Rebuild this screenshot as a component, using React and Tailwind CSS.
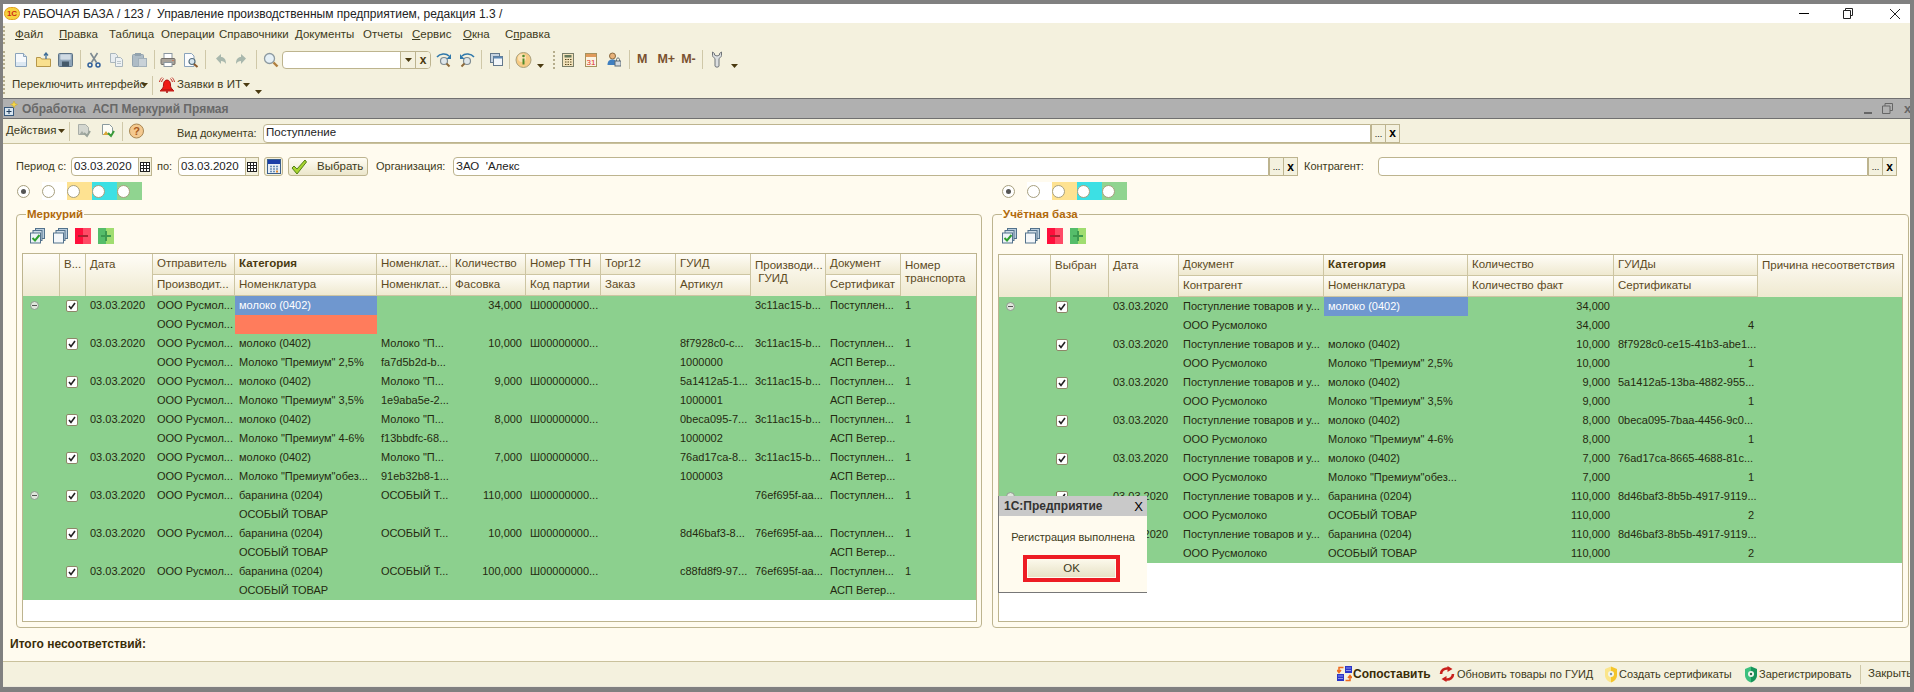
import React from "react";

const brown = "text-[#5c4a1e]";

const Svg = ({ w = 16, h = 16, className = "", children }) => (
  <svg width={w} height={h} viewBox={`0 0 ${w} ${h}`} className={`shrink-0 ${className}`}>
    {children}
  </svg>
);

const Arrow = ({ className = "" }) => (
  <Svg w={7} h={4} className={className}>
    <path d="M0 0h7L3.500 4z" fill="#4a3a10" />
  </Svg>
);

const Sep = ({ className = "" }) => <div className={`w-px h-[19px] bg-[#cfc8a8] shrink-0 ${className}`} />;

const Handle = () => (
  <div className="w-[3px] h-[18px] shrink-0 border-l-2 border-dotted border-[#b5ad8c]" />
);

const NewDoc = () => (
  <Svg w={14}>
    <path d="M1.500 1.500h8l3 3v10h-11z" fill="#f6f9fc" stroke="#8aa3bb" />
    <path d="M2 10h10v4H2z" fill="#dce8f2" />
    <path d="M9.500 1.500v3h3" fill="#dbe6ef" stroke="#8aa3bb" />
  </Svg>
);
const Open = () => (
  <Svg w={15}>
    <path d="M.5 5.500h4l1 1.500h9v7.500H.5z" fill="#f9e08e" stroke="#b6974a" />
    <path d="M10 7V2M8 3.500L10 1l2 2.500" fill="none" stroke="#3f6f99" strokeWidth="1.300" />
  </Svg>
);
const Save = () => (
  <Svg w={15}>
    <rect x=".5" y="1.500" width="14" height="13" rx="1" fill="#8ea4b8" stroke="#5d7386" />
    <rect x="2.500" y="2.500" width="10" height="5" fill="#e8eef3" />
    <path d="M3 4h9M3 6h9" stroke="#b8c8d5" />
    <rect x="4" y="9.500" width="7" height="5" fill="#44596a" />
  </Svg>
);
const Cut = () => (
  <Svg w={14}>
    <path d="M3.500 1l6 9.500M10.500 1l-6 9.500" stroke="#7d8a92" strokeWidth="1.600" fill="none" />
    <circle cx="3" cy="13" r="2" fill="none" stroke="#2f5f9a" strokeWidth="1.500" />
    <circle cx="11" cy="13" r="2" fill="none" stroke="#2f5f9a" strokeWidth="1.500" />
  </Svg>
);
const CopyIcon = () => (
  <Svg w={15}>
    <path d="M1.500 1.500h5l2 2v7h-7z" fill="#e8edf0" stroke="#aab6bd" />
    <path d="M6.500 5.500h5l2 2v7h-7z" fill="#eef2f4" stroke="#aab6bd" />
    <path d="M8 9.500h4M8 11.500h4" stroke="#bcc6cb" />
  </Svg>
);
const Paste = () => (
  <Svg w={15}>
    <rect x=".5" y="2.500" width="11" height="12" rx="1" fill="#aebcc6" stroke="#93a3ae" />
    <rect x="6.500" y="6.500" width="8" height="8" fill="#c9d2d8" stroke="#a3b1ba" />
    <rect x="3" y="1" width="6" height="3" fill="#93a3ae" />
  </Svg>
);
const Printer = () => (
  <Svg>
    <rect x="4" y="1.500" width="8" height="5" fill="#fff" stroke="#8b97a0" />
    <rect x="1" y="6.500" width="14" height="6" rx="1" fill="#a9a39a" stroke="#75706a" />
    <path d="M12.500 8.500h1" stroke="#d85a2a" strokeWidth="1.200" />
    <rect x="4" y="10.500" width="8" height="4" fill="#fff" stroke="#8b97a0" />
  </Svg>
);
const Preview = () => (
  <Svg>
    <path d="M1.500 1.500h7l2.500 2.500v10.500H1.500z" fill="#fbfcfd" stroke="#8aa3bb" />
    <circle cx="9" cy="9.500" r="3" fill="#d7e6ef" stroke="#56707f" strokeWidth="1.200" />
    <path d="M11 12l3.500 3" stroke="#8c5a2c" strokeWidth="2" />
  </Svg>
);
const Back = ({ flip }) => (
  <Svg w={12} className={flip ? "-scale-x-100" : ""}>
    <path d="M1 6.500L6 2v3c3 0 5 2 5 7-1-2-3-3-5-3v3z" fill="#a9b8ad" />
  </Svg>
);
const Lens = () => (
  <Svg>
    <circle cx="6.500" cy="6.500" r="5" fill="#e5f0f6" stroke="#8d9aa0" strokeWidth="1.300" />
    <path d="M10.500 10.500l4 4" stroke="#b07f3e" strokeWidth="2.400" />
  </Svg>
);
const FindIcon = ({ flip }) => (
  <Svg className={flip ? "-scale-x-100" : ""}>
    <circle cx="8" cy="9" r="3.500" fill="#dfe7ea" stroke="#7f8c92" strokeWidth="1.200" />
    <path d="M10.500 11.500l3 3" stroke="#8c6a3a" strokeWidth="2" />
    <path d="M1 5C4 1.500 10 1 13 4" fill="none" stroke="#2f78ab" strokeWidth="1.600" />
    <path d="M15 2v5h-4.500z" fill="#2f78ab" />
  </Svg>
);
const Windows = () => (
  <Svg w={15}>
    <rect x="1.500" y="1.500" width="9" height="9" fill="#c6d3e0" stroke="#63788c" />
    <rect x="4.500" y="4.500" width="9" height="9" fill="#f2f6f9" stroke="#63788c" />
    <path d="M4.500 5.500h9" stroke="#5d88b5" strokeWidth="2" />
  </Svg>
);
const Info = () => (
  <Svg w={17}>
    <circle cx="8.500" cy="8" r="7.500" fill="#f6cb84" stroke="#a9a07c" />
    <circle cx="7" cy="6" r="4" fill="#fbe3b5" />
    <circle cx="8.500" cy="4" r="1.300" fill="#4f8a2c" />
    <path d="M8.500 6.500v6" stroke="#4f8a2c" strokeWidth="2" />
  </Svg>
);
const Calc = () => (
  <Svg w={12}>
    <rect x=".5" y="1.500" width="11" height="13" fill="#f3e3bb" stroke="#7a7f6a" />
    <rect x="2.500" y="3" width="7" height="2.500" fill="#66795a" />
    <path d="M3 7.500h1.500M5.500 7.500H7M8 7.500h1.500M3 10h1.500M5.500 10H7M8 10h1.500M3 12.500h1.500M5.500 12.500H7M8 12.500h1.500" stroke="#5a4a20" />
  </Svg>
);
const Cal31 = () => (
  <Svg w={12}>
    <rect x=".5" y="1.500" width="11" height="13" fill="#fbf4e3" stroke="#a5925f" />
    <rect x="1" y="2" width="10" height="3" fill="#e09a5a" />
    <text x="6" y="13" textAnchor="middle" fontSize="8" fontFamily="Liberation Sans" fill="#e0301f">31</text>
  </Svg>
);
const UserLock = () => (
  <Svg w={14}>
    <circle cx="5.500" cy="4" r="3" fill="#e8b27a" stroke="#8a6a40" />
    <path d="M.5 13c0-4 2-5.500 5-5.500S9 9 9 10v3z" fill="#3f7fc0" />
    <rect x="8" y="9" width="6" height="5" fill="#d4dadf" stroke="#5b6a75" />
    <path d="M9.500 9V7.500c0-2 3-2 3 0V9" fill="none" stroke="#5b6a75" />
  </Svg>
);
const Wrench = () => (
  <Svg w={10} h={17}>
    <path d="M.5 1v3.500C.5 6 2.500 7 3 7.500V15c0 1.500 4 1.500 4 0V7.500c.5-.5 2.500-1.500 2.500-3V1L7.500 2.500V4L5 5 2.500 4V2.500z" fill="#dcdfe0" stroke="#6f7478" />
  </Svg>
);
const Bell = () => (
  <Svg>
    <path d="M8 3c2.500 0 3.500 2.500 3.500 5s1 3.500 2.500 5H2c1.500-1.500 2.500-2.500 2.500-5S5.500 3 8 3z" fill="#f01a14" stroke="#a81210" />
    <rect x="1" y="13" width="14" height="1.500" fill="#c8201a" />
    <circle cx="8" cy="15" r="1" fill="#a81210" />
    <path d="M2.500 5c.5-1.500 1-2.500 2-3.500M13.500 5c-.5-1.500-1-2.500-2-3.500M.5 5C1 3 1.500 2 3 .5M15.500 5C15 3 14.500 2 13 .5" stroke="#c02a20" fill="none" />
  </Svg>
);
const SubIcon = () => (
  <Svg w={14}>
    <rect x=".5" y="6.500" width="9" height="8" fill="#d9e6f0" stroke="#37597c" />
    <path d="M5 8v5M2.500 10.500h5" stroke="#1d3a5a" />
    <path d="M10 0l1 2.500 2.500 1-2.500 1-1 2.500-1-2.500-2.500-1 2.500-1z" fill="#f5d94a" stroke="#c7a22a" strokeWidth=".5" />
  </Svg>
);
const DocGreen = ({ gray }) => (
  <Svg w={15}>
    <path d="M2.500 1.500h7l3 3v7h-10z" fill={gray ? "#d3d6cf" : "#fdfdf6"} stroke={gray ? "#a9aea8" : "#8a9a9e"} />
    <path d="M3 12l3-4 3 4z" fill={gray ? "#a3aaa3" : "#d9a637"} />
    <path d="M8 10l3 3 3-5" fill="none" stroke={gray ? "#9aa39a" : "#3a9b3a"} strokeWidth="2" />
  </Svg>
);
const Help = () => (
  <Svg w={15}>
    <circle cx="7.500" cy="8" r="7" fill="#f4c98f" stroke="#a88753" />
    <text x="7.500" y="12" textAnchor="middle" fontSize="11" fontWeight="bold" fontFamily="Liberation Sans" fill="#a85a1f">?</text>
  </Svg>
);
const Grid = () => (
  <Svg w={10} h={10}>
    <rect x=".5" y=".5" width="9" height="9" fill="#fff" stroke="#222" />
    <path d="M.5 3.500h9M.5 6.500h9M3.500 .5v9M6.500 .5v9" stroke="#222" />
  </Svg>
);
const PeriodCal = () => (
  <Svg w={14} h={15}>
    <rect x=".5" y=".5" width="13" height="14" fill="#e8eef5" stroke="#3b5f8c" />
    <rect x="1" y="1" width="12" height="4" fill="#1d3fa8" />
    <path d="M3 7.500h2M6 7.500h2M9 7.500h2M3 10h2M6 10h2M9 10h2M3 12.500h2M6 12.500h2" stroke="#6c8fb5" strokeWidth="1.400" />
    <rect x="9" y="11.500" width="2" height="2" fill="#e08a2a" />
  </Svg>
);
const CheckBig = () => (
  <Svg w={16} h={16}>
    <path d="M1 9l2-2 3 3L14 1l1.500 2L6 15z" fill="#a8d42e" stroke="#55801a" />
  </Svg>
);
const SelectAll = () => (
  <Svg w={15}>
    <rect x="5.500" y=".5" width="9" height="10" fill="#b9cddd" stroke="#53728c" />
    <rect x="3" y="2.500" width="9" height="10" fill="#cfdce6" stroke="#53728c" />
    <rect x=".5" y="5" width="10" height="10" fill="#eef4f7" stroke="#53728c" />
    <path d="M2.500 10l2.500 2.500L9.500 7" fill="none" stroke="#2fa02f" strokeWidth="2" />
  </Svg>
);
const SelectNone = () => (
  <Svg w={15}>
    <rect x="5.500" y=".5" width="9" height="10" fill="#b9cddd" stroke="#53728c" />
    <rect x="3" y="2.500" width="9" height="10" fill="#cfdce6" stroke="#53728c" />
    <rect x=".5" y="5" width="10" height="10" fill="#f4f7f9" stroke="#53728c" />
  </Svg>
);
const RedMinus = () => (
  <Svg>
    <rect width="8" height="16" fill="#ff0f3c" />
    <rect x="8" width="8" height="16" fill="#ff4a66" />
    <rect x="3" y="7" width="10" height="2" fill="#a8202f" />
  </Svg>
);
const GreenPlus = () => (
  <Svg>
    <rect width="8" height="16" fill="#55bd6a" />
    <rect x="8" width="8" height="16" fill="#a0dd70" />
    <path d="M8 3v10M3 8h10" stroke="#3c9a50" strokeWidth="2" />
  </Svg>
);
const Match = () => (
  <Svg w={15} h={16}>
    <rect x="8" y="0" width="7" height="7" fill="#2b35c8" />
    <path d="M9 2h5M9 4.500h5" stroke="#8d94e8" />
    <rect x="0" y="8" width="7" height="7" fill="#2b35c8" />
    <path d="M1 10h5M1 12.500h5" stroke="#8d94e8" />
    <path d="M6.500 1.500H2V6M0 4l2 2.500L4 4" fill="none" stroke="#ee6a1c" strokeWidth="1.500" />
    <path d="M8.500 14.500H13V10M11 12l2-2.500 2 2.500" fill="none" stroke="#ee6a1c" strokeWidth="1.500" />
  </Svg>
);
const Refresh = () => (
  <Svg h={16}>
    <path d="M2 8C2 4.500 5 2 9 2.500M14 8c0 3.500-3 6-7 5.500" fill="none" stroke="#c8201c" strokeWidth="2.600" />
    <path d="M8.500 0l5 3-5 3zM7.500 16l-5-3 5-3z" fill="#c8201c" />
  </Svg>
);
const Shield = ({ left, right, dot }) => (
  <Svg w={14} h={17}>
    <path d="M7 .5L1 3v6c0 4 3 6.500 6 7.500z" fill={left} />
    <path d="M7 .5l6 2.500v6c0 4-3 6.500-6 7.500z" fill={right} />
    <circle cx="7" cy="8" r="3" fill="#f4f6ee" />
    <circle cx="7" cy="8" r="1.200" fill={dot} />
  </Svg>
);

const Dots = () => (
  <div className="w-[15px] h-full shrink-0 bg-[#f4f1de] border border-[#bdb48f] flex items-end justify-center pb-[3px] text-[9px] leading-none text-black">...</div>
);
const Clear = () => (
  <div className="w-[15px] h-full shrink-0 -ml-px bg-[#f4f1de] border border-[#bdb48f] flex items-center justify-center text-[12px] leading-none font-bold text-black">x</div>
);

const Input = ({ value, className = "" }) => (
  <div className={`h-full flex items-center bg-white border border-[#bdb48f] pl-[2px] overflow-hidden whitespace-nowrap text-[11.5px] text-[#222] rounded-l-[4px] ${className}`}>
    {value}
  </div>
);

const DateField = ({ className = "" }) => (
  <div className={`flex h-full shrink-0 ${className}`}>
    <Input value="03.03.2020" className="w-[68px]" />
    <div className="w-[14px] -ml-px border border-[#bdb48f] bg-[#f4f1de] flex items-center justify-center">
      <Grid />
    </div>
  </div>
);

const Radio = ({ on }) => (
  <div className="w-[13px] h-[13px] rounded-full bg-white border border-[#a79f7e] flex items-center justify-center">
    {on && <div className="w-[5px] h-[5px] rounded-full bg-[#555]" />}
  </div>
);

const RadioCell = ({ on, bg = "" }) => (
  <div className={`w-[25px] h-[18px] flex items-center ${bg}`}>
    <Radio on={on} />
  </div>
);

const RadioRow = ({ className = "" }) => (
  <div className={`flex ${className}`}>
    <RadioCell on />
    <RadioCell bg="bg-white" />
    <RadioCell bg="bg-[#fee291]" />
    <RadioCell bg="bg-[#3ce0e4]" />
    <RadioCell bg="bg-[#90d490]" />
  </div>
);

const Check = () => (
  <div className="w-[12px] h-[12px] rounded-[2px] bg-white border border-[#8d8668] flex items-center justify-center">
    <svg width="8" height="8" viewBox="0 0 8 8">
      <path d="M1 4l2 2.500L7 1" fill="none" stroke="#222" strokeWidth="1.600" />
    </svg>
  </div>
);

const Expander = () => (
  <div className="w-[9px] h-[9px] rounded-full bg-[#dfe6dc] border border-[#8c9a8c] flex items-center justify-center">
    <div className="w-[5px] h-px bg-[#555]" />
  </div>
);

const hCell = "flex items-center pl-1 border-r border-[#cdc5a2] overflow-hidden whitespace-nowrap";
const hGrad = "bg-gradient-to-b from-[#fffdf7] to-[#efe9d0]";

const HeadCell = ({ children, span, bold, className = "" }) => (
  <div className={`${hCell} ${hGrad} ${span ? "row-span-2 items-start pt-[5px]" : "h-[21px] border-b"} ${bold ? "font-bold text-[#4a3a10]" : ""} ${className}`}>
    {children}
  </div>
);

const cellBase = "flex items-center overflow-hidden whitespace-nowrap h-[19px]";

// в строке: колонки слева направо, right - номера колонок с выравниванием вправо
const Row = ({ cols, cells, right, fills = {}, checkPad }) => (
  <div className={`grid ${cols} h-[19px]`}>
    {cells.map((c, i) => (
      <div key={i} className={`${cellBase} ${right.includes(i) ? "justify-end pr-1" : "pl-1"} ${fills[i] || ""}`}>
        {c === "E" ? <div className="pl-[3px]"><Expander /></div> : c === "C" ? <div className={checkPad}><Check /></div> : c}
      </div>
    ))}
  </div>
);

const leftCols = "grid-cols-[37px_26px_67px_82px_142px_74px_75px_75px_75px_75px_75px_75px_75px]";
const rightCols = "grid-cols-[52px_58px_70px_145px_144px_146px_144px_144px]";

const L1 = "ООО Русмол...";
const SH = "Ш00000000...";
const GU = "3c11ac15-b...";
const PS = "Поступлен...";
const OV = "АСП Ветер...";
const D = "03.03.2020";
const MILK = "молоко (0402)";
const RAM = "баранина (0204)";
const ST = "ОСОБЫЙ Т...";
const SP = "ОСОБЫЙ ТОВАР";

const leftRows = [
  ["E", "C", D, L1, MILK, "", "34,000", SH, "", "", GU, PS, "1"],
  ["", "", "", L1, "", "", "", "", "", "", "", "", ""],
  ["", "C", D, L1, MILK, 'Молоко "П...', "10,000", SH, "", "8f7928c0-c...", GU, PS, "1"],
  ["", "", "", L1, 'Молоко "Премиум" 2,5%', "fa7d5b2d-b...", "", "", "", "1000000", "", OV, ""],
  ["", "C", D, L1, MILK, 'Молоко "П...', "9,000", SH, "", "5a1412a5-1...", GU, PS, "1"],
  ["", "", "", L1, 'Молоко "Премиум" 3,5%', "1e9aba5e-2...", "", "", "", "1000001", "", OV, ""],
  ["", "C", D, L1, MILK, 'Молоко "П...', "8,000", SH, "", "0beca095-7...", GU, PS, "1"],
  ["", "", "", L1, 'Молоко "Премиум" 4-6%', "f13bbdfc-68...", "", "", "", "1000002", "", OV, ""],
  ["", "C", D, L1, MILK, 'Молоко "П...', "7,000", SH, "", "76ad17ca-8...", GU, PS, "1"],
  ["", "", "", L1, 'Молоко "Премиум"обез...', "91eb32b8-1...", "", "", "", "1000003", "", OV, ""],
  ["E", "C", D, L1, RAM, ST, "110,000", SH, "", "", "76ef695f-aa...", PS, "1"],
  ["", "", "", "", SP, "", "", "", "", "", "", "", ""],
  ["", "C", D, L1, RAM, ST, "10,000", SH, "", "8d46baf3-8...", "76ef695f-aa...", PS, "1"],
  ["", "", "", "", SP, "", "", "", "", "", "", OV, ""],
  ["", "C", D, L1, RAM, ST, "100,000", SH, "", "c88fd8f9-97...", "76ef695f-aa...", PS, "1"],
  ["", "", "", "", SP, "", "", "", "", "", "", OV, ""],
];

const PT = "Поступление товаров и у...";
const RU = "ООО Русмолоко";
const rightRows = [
  ["E", "C", D, PT, MILK, "34,000", "", ""],
  ["", "", "", RU, "", "34,000", "4", ""],
  ["", "C", D, PT, MILK, "10,000", "8f7928c0-ce15-41b3-abe1...", ""],
  ["", "", "", RU, 'Молоко "Премиум" 2,5%', "10,000", "1", ""],
  ["", "C", D, PT, MILK, "9,000", "5a1412a5-13ba-4882-955...", ""],
  ["", "", "", RU, 'Молоко "Премиум" 3,5%', "9,000", "1", ""],
  ["", "C", D, PT, MILK, "8,000", "0beca095-7baa-4456-9c0...", ""],
  ["", "", "", RU, 'Молоко "Премиум" 4-6%', "8,000", "1", ""],
  ["", "C", D, PT, MILK, "7,000", "76ad17ca-8665-4688-81c...", ""],
  ["", "", "", RU, 'Молоко "Премиум"обез...', "7,000", "1", ""],
  ["E", "C", D, PT, RAM, "110,000", "8d46baf3-8b5b-4917-9119...", ""],
  ["", "", "", RU, SP, "110,000", "2", ""],
  ["", "C", D, PT, RAM, "110,000", "8d46baf3-8b5b-4917-9119...", ""],
  ["", "", "", RU, SP, "110,000", "2", ""],
];

const Panel = ({ title, className, iconsMl, children }) => (
  <div className={`relative h-[414px] border border-[#bdb48f] rounded-[4px] shrink-0 ${className}`}>
    <div className="absolute -top-[8px] left-[9px] px-px bg-[#fffbef] text-[11.5px] font-bold leading-[15px] text-[#b0690a]">{title}</div>
    <div className={`flex mt-[13px] ${iconsMl}`}>
      <SelectAll />
      <div className="ml-[8px]"><SelectNone /></div>
      <div className="ml-[7px]"><RedMinus /></div>
      <div className="ml-[7px]"><GreenPlus /></div>
    </div>
    {children}
  </div>
);

const ToolText = ({ children, className = "" }) => (
  <span className={`text-[12.5px] font-bold text-[#7a5230] whitespace-nowrap ${className}`}>{children}</span>
);

const BottomItem = ({ icon, children, className = "", textClass = "" }) => (
  <div className={`flex items-center shrink-0 ${className}`}>
    {icon}
    <span className={`whitespace-nowrap ${textClass}`}>{children}</span>
  </div>
);

const menu = [
  ["", "Ф", "айл", "w-[44px] ml-[9px]"],
  ["", "П", "равка", "w-[50px]"],
  ["Таблица", "", "", "w-[52px]"],
  ["Операции", "", "", "w-[58px]"],
  ["Справочники", "", "", "w-[76px]"],
  ["Документы", "", "", "w-[68px]"],
  ["Отчеты", "", "", "w-[49px]"],
  ["", "С", "ервис", "w-[51px]"],
  ["", "О", "кна", "w-[42px]"],
  ["С", "п", "равка", "w-[50px]"],
];

const App = () => {
  return (
    <div className="relative w-[1914px] h-[692px] overflow-hidden flex flex-col bg-[#fffbef] border-t-[4px] border-l-[3px] border-r-[4px] border-b-[5px] border-[#808080] text-[11px] leading-none text-[#25290f] [font-family:'Liberation_Sans',sans-serif]">
      {/* заголовок окна */}
      <div className="h-[19px] shrink-0 bg-white flex items-center text-[12px] text-[#222]">
        <div className="ml-[1px] w-[16px] h-[13px] rounded-full bg-[#f7d23e] border border-[#e0a020] flex items-center justify-center text-[8px] font-bold text-[#cc2a14]">1С</div>
        <span className="ml-[3px] whitespace-pre">РАБОЧАЯ БАЗА / 123 /  Управление производственным предприятием, редакция 1.3 /</span>
        <div className="ml-auto flex items-center">
          <div className="w-[10px] h-px bg-black" />
          <svg width="10" height="11" viewBox="0 0 10 11" className="ml-[34px]">
            <path d="M2.500 2.500V.5h7v7h-2M.5 2.500h7v8h-7z" fill="none" stroke="#222" />
          </svg>
          <svg width="10" height="10" viewBox="0 0 10 10" className="ml-[37px] mr-[10px]">
            <path d="M0 0l10 10M10 0L0 10" stroke="#222" />
          </svg>
        </div>
      </div>

      {/* меню и панели */}
      <div className="h-[75px] shrink-0 bg-[#f4f1de] flex flex-col">
        <div className="h-[24px] flex items-center text-[11.5px] text-[#3d3a20]">
          <Handle />
          {menu.map(([a, u, b, c]) => (
            <span key={a + u + b} className={`${c} whitespace-nowrap`}>
              {a}
              {u && <span className="underline">{u}</span>}
              {b}
            </span>
          ))}
        </div>
        <div className="h-[25px] flex items-center">
          <Handle />
          <div className="ml-[8px]"><NewDoc /></div>
          <div className="ml-[8px]"><Open /></div>
          <div className="ml-[7px]"><Save /></div>
          <Sep className="ml-[7px]" />
          <div className="ml-[6px]"><Cut /></div>
          <div className="ml-[8px]"><CopyIcon /></div>
          <div className="ml-[8px]"><Paste /></div>
          <Sep className="ml-[7px]" />
          <div className="ml-[5px]"><Printer /></div>
          <div className="ml-[7px]"><Preview /></div>
          <Sep className="ml-[6px]" />
          <div className="ml-[9px]"><Back /></div>
          <div className="ml-[8px]"><Back flip /></div>
          <Sep className="ml-[9px]" />
          <div className="ml-[6px]"><Lens /></div>
          <div className="ml-[3px] w-[149px] h-[18px] flex shrink-0 bg-white border border-[#bdb48f] rounded-[4px] overflow-hidden">
            <div className="flex-1" />
            <div className="w-[15px] border-l border-[#bdb48f] bg-[#f4f1de] flex items-center justify-center"><Arrow /></div>
            <div className="w-[15px] border-l border-[#bdb48f] bg-[#f4f1de] flex items-center justify-center text-[12px] font-bold text-[#4a3a10]">x</div>
          </div>
          <div className="ml-[5px]"><FindIcon /></div>
          <div className="ml-[7px]"><FindIcon flip /></div>
          <Sep className="ml-[6px]" />
          <div className="ml-[7px]"><Windows /></div>
          <Sep className="ml-[5px]" />
          <div className="ml-[5px]"><Info /></div>
          <Arrow className="ml-[5px] mt-[12px]" />
          <div className="ml-[9px]"><Handle /></div>
          <div className="ml-[6px]"><Calc /></div>
          <div className="ml-[11px]"><Cal31 /></div>
          <div className="ml-[10px]"><UserLock /></div>
          <Sep className="ml-[8px]" />
          <ToolText className="ml-[7px]">M</ToolText>
          <ToolText className="ml-[10px]">M+</ToolText>
          <ToolText className="ml-[6px]">M-</ToolText>
          <Sep className="ml-[6px]" />
          <div className="ml-[9px]"><Wrench /></div>
          <Arrow className="ml-[9px] mt-[12px]" />
        </div>
        <div className="h-[26px] flex items-center">
          <Handle />
          <span className="ml-[6px] w-[125px] whitespace-nowrap text-[11.5px] text-[#3d3a20]">Переключить интерфейс</span>
          <Arrow className="ml-[4px]" />
          <Sep className="ml-[4px]" />
          <div className="ml-[6px]"><Bell /></div>
          <span className="ml-[2px] w-[64px] whitespace-nowrap text-[11.5px] text-[#3d3a20]">Заявки в ИТ</span>
          <Arrow className="ml-[2px]" />
          <Arrow className="ml-[5px] mt-[13px]" />
        </div>
      </div>

      {/* заголовок обработки */}
      <div className="h-[21px] shrink-0 bg-[#b0b0b0] border-y border-[#707070] flex items-center">
        <div className="ml-[1px]"><SubIcon /></div>
        <span className="ml-[4px] font-bold text-[12px] text-[#686868] whitespace-pre">Обработка  АСП Меркурий Прямая</span>
        <div className="ml-auto flex items-center text-[#666]">
          <div className="w-[8px] h-[2px] bg-[#666] mt-[8px]" />
          <svg width="11" height="11" viewBox="0 0 11 11" className="ml-[10px]">
            <path d="M3 3V.5h7.500v7H8M.5 3h7.500v7.500H.5z" fill="none" stroke="#666" />
          </svg>
          <span className="ml-[11px] w-[6px] overflow-hidden text-[13px] font-bold">x</span>
        </div>
      </div>

      {/* действия */}
      <div className={`h-[25px] shrink-0 bg-[#f4f1de] border-b border-[#c9c19c] flex items-center ${brown}`}>
        <span className="ml-[3px] w-[49px] text-[11.5px] whitespace-nowrap text-[#3d3a20]">Действия</span>
        <Arrow className="ml-[3px]" />
        <Sep className="ml-[4px]" />
        <div className="ml-[6px]"><DocGreen gray /></div>
        <div className="ml-[9px]"><DocGreen /></div>
        <Sep className="ml-[7px]" />
        <div className="ml-[6px]"><Help /></div>
        <span className="ml-[33px] mt-[4px] w-[78px] whitespace-nowrap text-[11px] text-[#3d3a20]">Вид документа:</span>
        <div className="ml-[8px] mt-[4px] flex h-[19px]">
          <Input value="Поступление" className="w-[1108px]" />
          <Dots />
          <Clear />
        </div>
      </div>

      {/* отбор */}
      <div className="mt-[13px] h-[19px] shrink-0 flex items-center text-[11px] text-[#3d3a20]">
        <span className="ml-[13px] w-[49px] whitespace-nowrap">Период с:</span>
        <DateField className="ml-[6px]" />
        <span className="ml-[5px] w-[14px]">по:</span>
        <DateField className="ml-[7px]" />
        <div className="ml-[5px] w-[19px] h-[19px] flex items-center justify-center border border-[#bdb48f] rounded-[3px] bg-[#f4f1de]"><PeriodCal /></div>
        <div className="ml-[5px] w-[80px] h-[19px] flex items-center border border-[#bdb48f] rounded-[3px] bg-gradient-to-b from-[#fffdf4] to-[#ece6cb]">
          <div className="ml-[2px]"><CheckBig /></div>
          <span className="ml-[10px] text-[11.5px]">Выбрать</span>
        </div>
        <span className="ml-[8px] w-[69px] whitespace-nowrap">Организация:</span>
        <div className="ml-[8px] flex h-full">
          <Input value={<span className="whitespace-pre">ЗАО  'Алекс</span>} className="w-[816px]" />
          <Dots />
          <Clear />
        </div>
        <span className="ml-[6px] w-[61px] whitespace-nowrap">Контрагент:</span>
        <div className="ml-[13px] flex h-full">
          <Input value="" className="w-[490px]" />
          <Dots />
          <Clear />
        </div>
      </div>

      <div className="mt-[6px] h-[18px] shrink-0 flex">
        <RadioRow className="ml-[14px]" />
        <RadioRow className="ml-[860px]" />
      </div>

      {/* две таблицы */}
      <div className="mt-[14px] shrink-0 flex ml-[13px]">
        <Panel title="Меркурий" className="w-[966px]" iconsMl="ml-[13px]">
          <div className="ml-[5px] mt-[9px] w-[955px] h-[369px] bg-white border border-[#bdb48f] text-[11px]">
            <div className={`grid ${leftCols} grid-rows-[21px_21px] ${brown} text-[11.5px]`}>
              <HeadCell span />
              <HeadCell span>В...</HeadCell>
              <HeadCell span>Дата</HeadCell>
              <HeadCell>Отправитель</HeadCell>
              <HeadCell bold>Категория</HeadCell>
              <HeadCell>Номенклат...</HeadCell>
              <HeadCell>Количество</HeadCell>
              <HeadCell>Номер ТТН</HeadCell>
              <HeadCell>Торг12</HeadCell>
              <HeadCell>ГУИД</HeadCell>
              <HeadCell span><span className="whitespace-pre leading-[13px]">{"Производи...\n ГУИД"}</span></HeadCell>
              <HeadCell>Документ</HeadCell>
              <HeadCell span className="border-r-0"><span className="whitespace-pre leading-[13px]">{"Номер\nтранспорта"}</span></HeadCell>
              <HeadCell>Производит...</HeadCell>
              <HeadCell>Номенклатура</HeadCell>
              <HeadCell>Номенклат...</HeadCell>
              <HeadCell>Фасовка</HeadCell>
              <HeadCell>Код партии</HeadCell>
              <HeadCell>Заказ</HeadCell>
              <HeadCell>Артикул</HeadCell>
              <HeadCell>Сертификат</HeadCell>
            </div>
            <div className="bg-[#8cd08e]">
              {leftRows.map((r, i) => (
                <Row
                  key={i}
                  cols={leftCols}
                  cells={r}
                  right={[6]}
                  checkPad="pl-[2px]"
                  fills={i === 0 ? { 4: "bg-[#6f97cf] text-white" } : i === 1 ? { 4: "bg-[#ff7c5c]" } : {}}
                />
              ))}
            </div>
          </div>
        </Panel>
        <Panel title="Учётная база" className="ml-[10px] w-[917px]" iconsMl="ml-[9px]">
          <div className="ml-[5px] mt-[10px] w-[905px] h-[368px] bg-white border border-[#bdb48f] text-[11px]">
            <div className={`grid ${rightCols} grid-rows-[21px_21px] ${brown} text-[11.5px]`}>
              <HeadCell span />
              <HeadCell span>Выбран</HeadCell>
              <HeadCell span>Дата</HeadCell>
              <HeadCell>Документ</HeadCell>
              <HeadCell bold>Категория</HeadCell>
              <HeadCell>Количество</HeadCell>
              <HeadCell>ГУИДы</HeadCell>
              <HeadCell span className="border-r-0">Причина несоответствия</HeadCell>
              <HeadCell>Контрагент</HeadCell>
              <HeadCell>Номенклатура</HeadCell>
              <HeadCell>Количество факт</HeadCell>
              <HeadCell>Сертификаты</HeadCell>
            </div>
            <div className="bg-[#8cd08e]">
              {rightRows.map((r, i) => (
                <Row
                  key={i}
                  cols={rightCols}
                  cells={r}
                  right={i % 2 === 1 ? [5, 6] : [5]}
                  checkPad="pl-[1px]"
                  fills={i === 0 ? { 4: "bg-[#6f97cf] text-white" } : {}}
                />
              ))}
            </div>
          </div>
        </Panel>
      </div>

      <div className="mt-[8px] h-[16px] shrink-0 flex items-center pl-[7px] font-bold text-[12px] text-[#3a2c08]">Итого несоответствий:</div>

      <div className="flex-1" />

      {/* нижняя панель */}
      <div className="h-[26px] shrink-0 bg-[#f4f1de] border-t border-[#c9c19c] border-b border-b-[#ece9dc] flex items-center justify-end text-[11px] text-[#3d3a20]">
        <BottomItem icon={<Match />} className="w-[102px]" textClass="ml-[1px] font-bold text-[12px] text-[#3a2c08]">Сопоставить</BottomItem>
        <BottomItem icon={<Refresh />} className="w-[165px]" textClass="ml-[2px]">Обновить товары по ГУИД</BottomItem>
        <BottomItem icon={<Shield left="#fbe58a" right="#f5c52a" dot="#7a93a5" />} className="w-[140px]" textClass="ml-[1px]">Создать сертификаты</BottomItem>
        <BottomItem icon={<Shield left="#3cc07e" right="#17955a" dot="#2c6b4a" />} className="w-[116px]" textClass="ml-[1px]">Зарегистрировать</BottomItem>
        <Sep />
        <span className="ml-[7px] w-[42px] whitespace-nowrap text-[11.5px]">Закрыть</span>
      </div>

      {/* окно сообщения поверх таблицы */}
      <div className="absolute left-[995px] top-[492px] w-[149px] h-[97px] flex flex-col bg-[#fffbef] border-b border-l border-[#777]">
        <div className="h-[20px] shrink-0 bg-[#c9c9c9] flex items-center justify-between pl-[5px] pr-[4px] text-[12px] font-bold text-[#333]">
          <span>1С:Предприятие</span>
          <span className="text-[13px] font-normal text-black">X</span>
        </div>
        <div className="mt-[16px] text-center text-[11px] text-[#3d3a20] whitespace-nowrap">Регистрация выполнена</div>
        <div className="mt-[12px] ml-[24px] w-[97px] h-[27px] border-[4px] border-[#ed1c24] bg-[#fffbef] p-px">
          <div className="h-full flex items-center justify-center bg-gradient-to-b from-[#fbf8ea] to-[#e7e2c6] text-[11.5px] text-[#3d3a20]">OK</div>
        </div>
      </div>
    </div>
  );
};

export default App;
